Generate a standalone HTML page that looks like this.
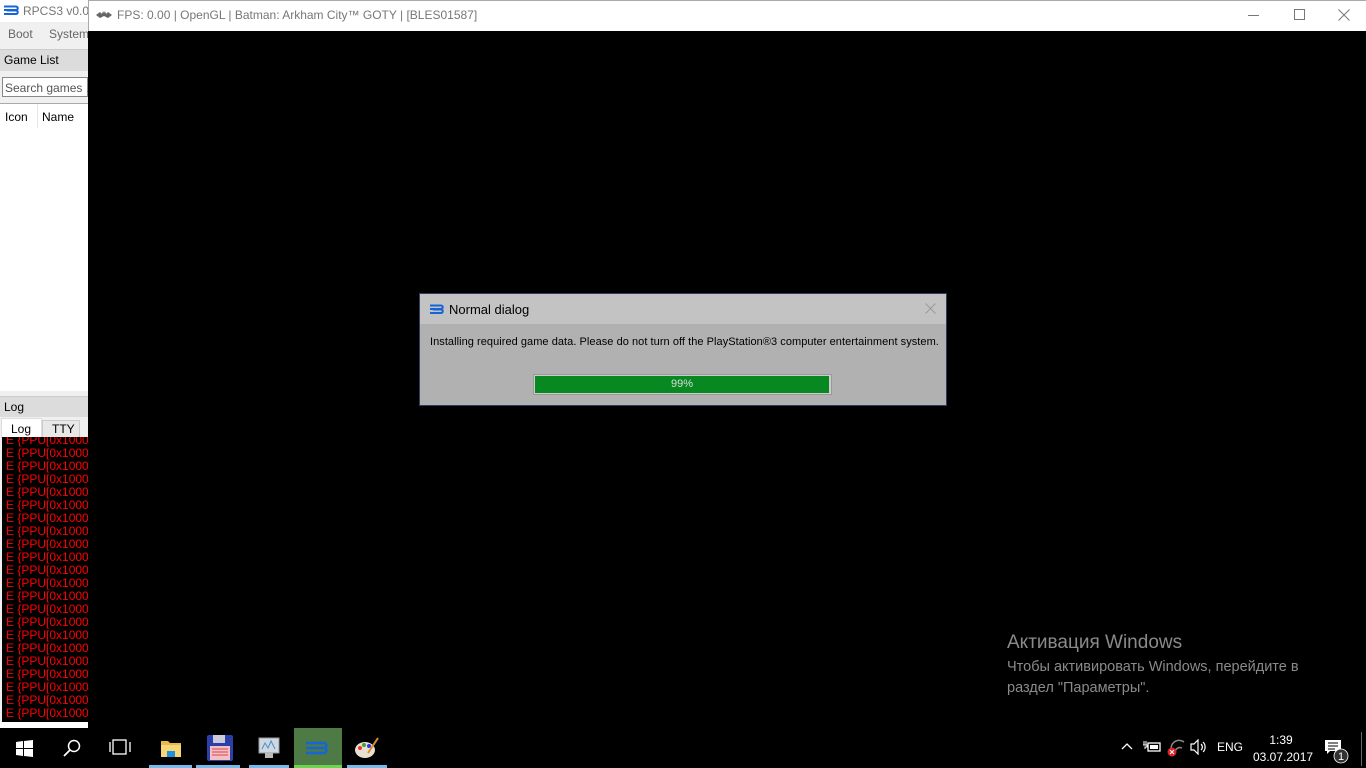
<!DOCTYPE html><html><head><style>
body{margin:0;width:1366px;height:768px;overflow:hidden;background:#000;font-family:"Liberation Sans",sans-serif;position:relative}
.a{position:absolute;white-space:nowrap}
.log div{color:#f00;font-size:12px;height:13px;line-height:13px;white-space:nowrap}
</style></head><body>
<div class="a" style="left:0;top:0;width:88px;height:728px;background:#f0f0f0;overflow:hidden;font-size:12px;color:#000">
 <div class="a" style="left:0;top:0;width:88px;height:22px;background:#fff"></div>
 <svg class="a" style="left:3px;top:5px" width="16" height="11"><path d="M1 1.5H13a1.5 1.5 0 0 1 0 3.5H4M1 5H13M4 5.5H13a1.5 1.5 0 0 1 0 3.5H1" fill="none" stroke="#1565d8" stroke-width="2"/></svg>
 <div class="a" style="left:23px;top:4px;color:#777">RPCS3 v0.0.2</div>
 <div class="a" style="left:8px;top:27px;color:#666">Boot</div>
 <div class="a" style="left:49px;top:27px;color:#666">System</div>
 <div class="a" style="left:0;top:49px;width:88px;height:21px;background:#dcdcdc;border-top:1px solid #ccc"></div>
 <div class="a" style="left:4px;top:53px">Game List</div>
 <div class="a" style="left:2px;top:77px;width:86px;height:20px;background:#fff;border:1px solid #888;box-sizing:border-box"></div>
 <div class="a" style="left:5px;top:81px;color:#555">Search games …</div>
 <div class="a" style="left:0;top:103px;width:88px;height:287px;background:#fff;border-top:1px solid #aaa"></div>
 <div class="a" style="left:37px;top:104px;width:1px;height:24px;background:#e5e5e5"></div>
 <div class="a" style="left:5px;top:110px">Icon</div>
 <div class="a" style="left:42px;top:110px">Name</div>
 <div class="a" style="left:0;top:396px;width:88px;height:20px;background:#dcdcdc;border-top:1px solid #ccc"></div>
 <div class="a" style="left:4px;top:400px">Log</div>
 <div class="a" style="left:1px;top:418px;width:41px;height:20px;background:#fff;border:1px solid #ddd;box-sizing:border-box"></div>
 <div class="a" style="left:11px;top:422px">Log</div>
 <div class="a" style="left:42px;top:420px;width:38px;height:18px;background:#e8e8e8;border:1px solid #ccc;box-sizing:border-box"></div>
 <div class="a" style="left:52px;top:422px">TTY</div>
 <div class="a log" style="left:2px;top:437px;width:86px;height:285px;background:#000;overflow:hidden;padding-left:4px;box-sizing:border-box">
  <div style="margin-top:-3px">E {PPU[0x1000000</div><div>E {PPU[0x1000000</div><div>E {PPU[0x1000000</div><div>E {PPU[0x1000000</div><div>E {PPU[0x1000000</div><div>E {PPU[0x1000000</div><div>E {PPU[0x1000000</div><div>E {PPU[0x1000000</div><div>E {PPU[0x1000000</div><div>E {PPU[0x1000000</div><div>E {PPU[0x1000000</div><div>E {PPU[0x1000000</div><div>E {PPU[0x1000000</div><div>E {PPU[0x1000000</div><div>E {PPU[0x1000000</div><div>E {PPU[0x1000000</div><div>E {PPU[0x1000000</div><div>E {PPU[0x1000000</div><div>E {PPU[0x1000000</div><div>E {PPU[0x1000000</div><div>E {PPU[0x1000000</div><div>E {PPU[0x1000000</div>
 </div>
 <div class="a" style="left:0;top:722px;width:88px;height:6px;background:#fff"></div>
</div>
<div class="a" style="left:88px;top:0;width:1278px;height:31px;background:#fff;border-left:1px solid #aaa;border-top:1px solid #aaa;box-sizing:border-box"></div>
<svg class="a" style="left:96px;top:11px" width="16" height="8"><path d="M0 4L4 1L6 3L7 0L8 2L9 0L10 3L12 1L16 4L12 7L8 5L4 7Z" fill="#666"/></svg>
<div class="a" style="left:117px;top:8px;font-size:12px;color:#777">FPS: 0.00 | OpenGL | Batman: Arkham City™ GOTY | [BLES01587]</div>
<div class="a" style="left:1248px;top:15px;width:11px;height:1px;background:#777"></div>
<div class="a" style="left:1294px;top:9px;width:9px;height:9px;border:1px solid #777"></div>
<svg class="a" style="left:1338px;top:9px" width="12" height="12"><path d="M0.5 0.5L11.5 11.5M11.5 0.5L0.5 11.5" stroke="#777"/></svg>
<div class="a" style="left:419px;top:293px;width:528px;height:113px;background:#b1b1b1;border:1px solid #2c3e5c;box-sizing:border-box">
 <div class="a" style="left:0;top:0;width:526px;height:30px;background:#c3c3c3"></div>
 <svg class="a" style="left:9px;top:10px" width="15" height="11"><path d="M1 1.5H12a1.5 1.5 0 0 1 0 3.5H4M1 5H12M4 5.5H12a1.5 1.5 0 0 1 0 3.5H1" fill="none" stroke="#1565d8" stroke-width="2"/></svg>
 <div class="a" style="left:29px;top:8px;font-size:13px;color:#000">Normal dialog</div>
 <svg class="a" style="left:505px;top:9px" width="11" height="11"><path d="M0.5 0.5L10.5 10.5M10.5 0.5L0.5 10.5" stroke="#999"/></svg>
 <div class="a" style="left:10px;top:42px;font-size:11px;color:#000;letter-spacing:0.05px">Installing required game data. Please do not turn off the PlayStation®3 computer entertainment system.</div>
 <div class="a" style="left:113px;top:80px;width:299px;height:21px;background:#ccc;border:1px solid #999;box-sizing:border-box">
  <div class="a" style="left:1px;top:1px;width:294px;height:17px;background:#078820;color:#ddd;font-size:11px;text-align:center;line-height:17px">99%</div>
 </div>
</div>
<div class="a" style="left:1007px;top:632px;font-size:19px;color:#8a8a8a">Активация Windows</div>
<div class="a" style="left:1007px;top:657px;font-size:14.5px;color:#8a8a8a;line-height:21px">Чтобы активировать Windows, перейдите в<br>раздел "Параметры".</div>
<div class="a" style="left:0;top:728px;width:1366px;height:40px;background:#000"></div>
<svg class="a" style="left:16px;top:740px" width="17" height="17"><path d="M0 2L7 1V8H0ZM8 1L17 0V8H8ZM0 9H7V16L0 15ZM8 9H17V17L8 16Z" fill="#fff"/></svg>
<svg class="a" style="left:63px;top:739px" width="18" height="18"><circle cx="11" cy="7" r="5.5" fill="none" stroke="#fff" stroke-width="1.5"/><path d="M7 11L1 17" stroke="#fff" stroke-width="1.8"/></svg>
<svg class="a" style="left:109px;top:739px" width="22" height="16"><rect x="4" y="1" width="13" height="14" fill="none" stroke="#fff" stroke-width="1.3"/><path d="M1 3V13M21 3V13" stroke="#fff" stroke-width="1.3"/></svg>
<svg class="a" style="left:160px;top:738px" width="22" height="20"><path d="M1 3H8L10 5H21V19H1Z" fill="#e8b84a"/><rect x="1" y="7" width="20" height="12" fill="#f8d676"/><path d="M7 19V13H15V19" fill="#1e90e0"/></svg>
<div class="a" style="left:149px;top:765px;width:43px;height:3px;background:#76b9ed"></div>
<svg class="a" style="left:207px;top:735px" width="26" height="26"><rect x="0" y="0" width="26" height="26" rx="2" fill="#2a3fa8"/><rect x="6" y="0" width="12" height="8" fill="#ccd"/><rect x="3" y="11" width="20" height="14" fill="#f4c0c8"/><path d="M5 14H21M5 17H21M5 20H21" stroke="#d44"/></svg>
<div class="a" style="left:196px;top:765px;width:44px;height:3px;background:#76b9ed"></div>
<svg class="a" style="left:257px;top:737px" width="24" height="22"><rect x="2" y="1" width="20" height="15" fill="#cfd8e0" stroke="#999"/><path d="M5 12L8 6L11 11L14 4L18 12" fill="none" stroke="#4a8fd0"/><rect x="8" y="16" width="8" height="5" fill="#bbb"/></svg>
<div class="a" style="left:249px;top:765px;width:40px;height:3px;background:#76b9ed"></div>
<div class="a" style="left:294px;top:728px;width:48px;height:40px;background:#4d7a45"></div>
<svg class="a" style="left:306px;top:741px" width="24" height="14"><path d="M0 2H19a3 3 0 0 1 0 5H6M0 7H19M6 7H19a3 3 0 0 1 0 5H0" fill="none" stroke="#1565d8" stroke-width="2.5"/></svg>
<div class="a" style="left:294px;top:765px;width:48px;height:3px;background:#6dd44f"></div>
<svg class="a" style="left:354px;top:736px" width="26" height="24"><ellipse cx="11" cy="14" rx="10" ry="8" fill="#e8e0d0"/><circle cx="6" cy="12" r="2" fill="#e33"/><circle cx="10" cy="9" r="2" fill="#3a3"/><circle cx="15" cy="10" r="2" fill="#33e"/><path d="M14 17L24 2" stroke="#d8912a" stroke-width="2"/></svg>
<div class="a" style="left:347px;top:765px;width:40px;height:3px;background:#76b9ed"></div>
<svg class="a" style="left:1121px;top:742px" width="12" height="8"><path d="M1 7L6 2L11 7" fill="none" stroke="#fff" stroke-width="1.3"/></svg>
<svg class="a" style="left:1143px;top:739px" width="18" height="14"><rect x="5" y="4" width="12" height="8" fill="none" stroke="#fff" stroke-width="1.3"/><rect x="7" y="6" width="8" height="4" fill="#fff"/><path d="M1 2V6M3 2V6M0 6H4V8H2V10" stroke="#fff"/></svg>
<svg class="a" style="left:1166px;top:738px" width="20" height="20"><path d="M6 14a8 8 0 0 1 12-10M9 15a5 5 0 0 1 7-5" fill="none" stroke="#888" stroke-width="1.5"/><circle cx="6" cy="14" r="4.5" fill="#d22"/><path d="M4 12L8 16M8 12L4 16" stroke="#fff"/></svg>
<svg class="a" style="left:1190px;top:739px" width="18" height="16"><path d="M1 5H4L8 1V15L4 11H1Z" fill="none" stroke="#fff" stroke-width="1.2"/><path d="M11 5a4 4 0 0 1 0 6M13 3a7 7 0 0 1 0 10" fill="none" stroke="#fff" stroke-width="1.2"/></svg>
<div class="a" style="left:1217px;top:740px;font-size:12px;color:#fff">ENG</div>
<div class="a" style="left:1253px;top:732px;width:56px;font-size:12px;color:#fff;text-align:center;line-height:17px">1:39<br>03.07.2017</div>
<svg class="a" style="left:1324px;top:739px" width="26" height="26"><path d="M1 1H17V12H6L3 15V12H1Z" fill="#fff"/><path d="M4 4H14M4 7H14M4 10H11" stroke="#000"/><circle cx="17" cy="17" r="7" fill="#333" stroke="#fff" stroke-width="0.8"/><text x="17" y="21" font-size="11" fill="#fff" text-anchor="middle" font-family="Liberation Sans">1</text></svg>
<div class="a" style="left:1361px;top:732px;width:1px;height:34px;background:#666"></div>
</body></html>
